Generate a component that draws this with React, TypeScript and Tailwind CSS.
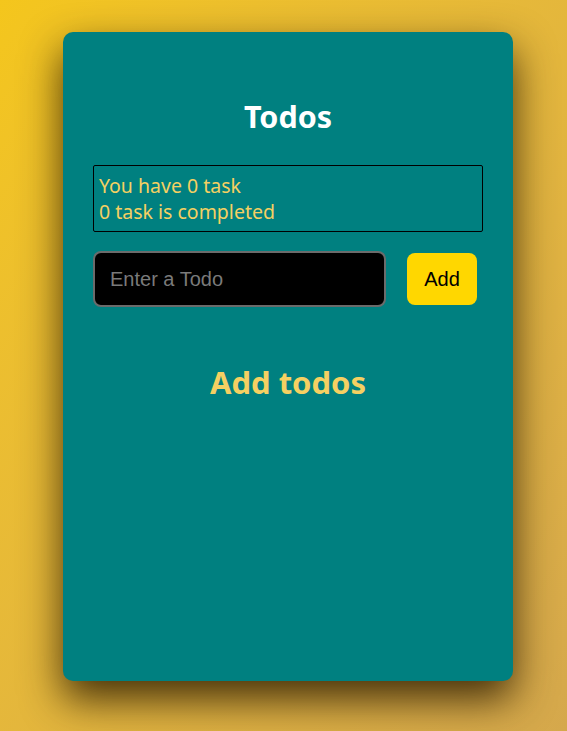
export default function App() {
  return (
    <div className="min-h-screen w-full bg-gradient-to-br from-[#f4c61c] to-[#d5a84c] pt-8 pl-[63px] font-['Noto_Sans',sans-serif]">
      <div className="flex h-[649px] w-[450px] flex-col rounded-[10px] bg-[#008080] px-[30px] pt-[64px] shadow-[0_18px_40px_rgba(40,25,0,0.85)]">
        <h1 className="text-center text-[30.5px] font-bold leading-[40px] text-white">Todos</h1>

        <div className="mt-[29px] flex flex-col rounded-[2px] border border-black px-[5px] pt-[7px] pb-[6px] text-[19.5px] leading-[26px] text-[#f5d062]">
          <span>You have 0 task</span>
          <span>0 task is completed</span>
        </div>

        <div className="mt-[19px] flex items-center gap-[21px]">
          <input
            type="text"
            placeholder="Enter a Todo"
            className="h-[56px] w-[293px] rounded-[8px] border-2 border-[#6b6b6b] bg-black px-[15px] font-['Liberation_Sans',sans-serif] text-[20px] text-white placeholder:text-[#7a7a7a] outline-none"
          />
          <button className="h-[52px] w-[70px] rounded-[8px] bg-[#ffd700] font-['Liberation_Sans',sans-serif] text-[20px] text-black">
            Add
          </button>
        </div>

        <h2 className="mt-[55px] text-center text-[31px] font-bold leading-[40px] text-[#f5d062]">Add todos</h2>
      </div>
    </div>
  );
}
